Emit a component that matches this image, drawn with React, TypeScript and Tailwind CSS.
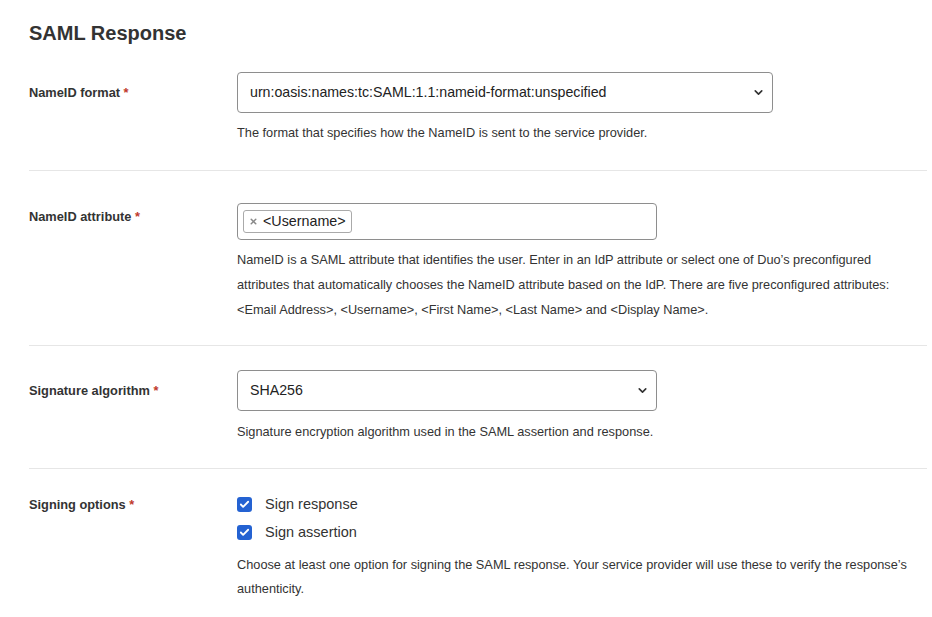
import { ChevronDown, X, Check } from "lucide-react";

const font = { fontFamily: '"Liberation Sans", Arial, Helvetica, sans-serif' };

function Label({ text, className }: { text: string; className?: string }) {
  return (
    <div className={`w-[208px] shrink-0 text-[12.8px] leading-4 font-bold text-[#333] ${className ?? ""}`}>
      {text} <span className="text-[#c0392b]">*</span>
    </div>
  );
}

function FakeSelect({ value, width }: { value: string; width: string }) {
  return (
    <div className={`relative h-[41px] ${width}`}>
      <select
        defaultValue={value}
        className="h-full w-full appearance-none rounded-[4px] border border-[#8e8e8e] bg-white pl-[12px] pr-8 text-[14.2px] text-[#222] outline-none"
        style={font}
      >
        <option value={value}>{value}</option>
      </select>
      <ChevronDown className="pointer-events-none absolute right-[8px] top-[14px] h-[13px] w-[13px] text-[#333]" strokeWidth={3} />
    </div>
  );
}

function Help({ children, className }: { children: React.ReactNode; className?: string }) {
  return <p className={`text-[12.75px] text-[#333] ${className ?? ""}`}>{children}</p>;
}

function CheckItem({ label }: { label: string }) {
  return (
    <label className="flex h-[21px] items-center gap-[13px]">
      <span className="flex h-[15px] w-[15px] items-center justify-center rounded-[3px] bg-[#2462d2]">
        <Check className="h-[11px] w-[11px] text-white" strokeWidth={4} />
      </span>
      <span className="text-[14.5px] text-[#333]">{label}</span>
    </label>
  );
}

export default function App() {
  return (
    <div className="min-h-[617px] bg-white pl-[29px] pr-[5px] pt-[21px]" style={font}>
      <h1 className="mb-[27px] text-[20px] leading-6 font-bold text-[#333]">SAML Response</h1>

      {/* NameID format */}
      <div className="flex border-b border-[#e6e6e6] pb-[25px]">
        <Label text="NameID format" className="mt-[13px]" />
        <div className="flex-1">
          <FakeSelect value="urn:oasis:names:tc:SAML:1.1:nameid-format:unspecified" width="w-[536px]" />
          <Help className="mt-[8px] leading-6">The format that specifies how the NameID is sent to the service provider.</Help>
        </div>
      </div>

      {/* NameID attribute */}
      <div className="flex border-b border-[#e6e6e6] pb-[23px] pt-[32px]">
        <Label text="NameID attribute" className="mt-[6px]" />
        <div className="flex-1">
          <div className="flex h-[37px] w-[420px] items-center rounded-[4px] border border-[#8e8e8e] px-[5px]">
            <span className="flex h-[23px] items-center gap-[5px] rounded-[3px] border border-[#aaa] bg-white pl-[5px] pr-[5px] text-[14.3px] text-[#222]">
              <X className="h-[9px] w-[9px] text-[#888]" strokeWidth={4} />
              &lt;Username&gt;
            </span>
          </div>
          <Help className="mt-[7px] leading-[25px]">
            NameID is a SAML attribute that identifies the user. Enter in an IdP attribute or select one of Duo’s preconfigured
            attributes that automatically chooses the NameID attribute based on the IdP. There are five preconfigured attributes:
            &lt;Email Address&gt;, &lt;Username&gt;, &lt;First Name&gt;, &lt;Last Name&gt; and &lt;Display Name&gt;.
          </Help>
        </div>
      </div>

      {/* Signature algorithm */}
      <div className="flex border-b border-[#e6e6e6] pb-[24px] pt-[24px]">
        <Label text="Signature algorithm" className="mt-[13px]" />
        <div className="flex-1">
          <FakeSelect value="SHA256" width="w-[420px]" />
          <Help className="mt-[9px] leading-6">Signature encryption algorithm used in the SAML assertion and response.</Help>
        </div>
      </div>

      {/* Signing options */}
      <div className="flex pt-[25px] pb-4">
        <Label text="Signing options" className="mt-[3px]" />
        <div className="flex-1">
          <div className="flex flex-col gap-[7px]">
            <CheckItem label="Sign response" />
            <CheckItem label="Sign assertion" />
          </div>
          <Help className="mt-[10px] leading-6">
            Choose at least one option for signing the SAML response. Your service provider will use these to verify the response’s
            authenticity.
          </Help>
        </div>
      </div>
    </div>
  );
}
